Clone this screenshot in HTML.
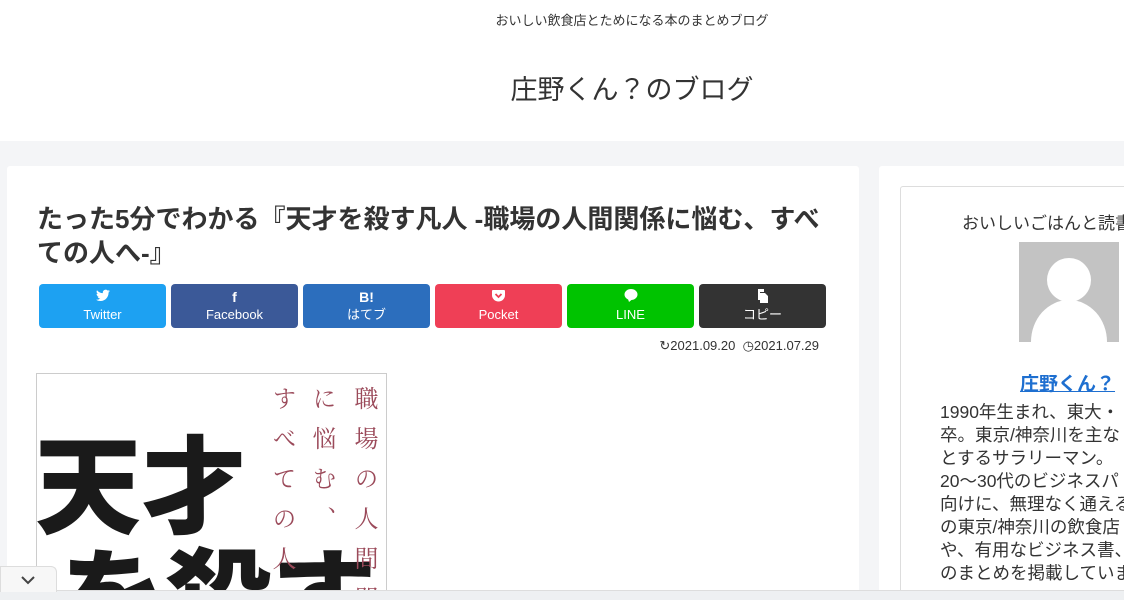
<!DOCTYPE html>
<html><head><meta charset="utf-8"><style>
*{margin:0;padding:0;box-sizing:border-box}
html,body{width:1124px;height:600px;overflow:hidden}
body{background:#f4f5f7;font-family:"Liberation Sans","Noto Sans CJK JP",sans-serif;color:#333;position:relative}
.hd{position:absolute;left:0;top:0;width:1124px;height:141px;background:#fff}
.tag{position:absolute;top:10px;left:0;width:1264px;text-align:center;font-size:13px;color:#333}
.logo{position:absolute;top:68px;left:0;width:1264px;text-align:center;font-size:27px;color:#333}
.main{position:absolute;left:7px;top:166px;width:852px;height:434px;background:#fff;border-radius:3px;overflow:hidden}
h1{position:absolute;left:30px;top:36px;width:800px;font-size:26px;line-height:34px;font-weight:bold;color:#333}
.btns{position:absolute;left:32px;top:118px;display:flex;gap:5px}
.b{width:127px;height:44px;border-radius:4px;color:#fff;text-align:center;font-size:13px;padding-top:5px;line-height:17px}
.b i{display:block;font-style:normal;font-weight:bold;font-size:14px;height:17px}
.date{position:absolute;right:40px;top:172px;font-size:13px;color:#333}
.book{position:absolute;left:29px;top:207px;width:351px;height:240px;border:1px solid #ccc;overflow:hidden;background:#fff}
.big{position:absolute;font-size:106px;font-weight:900;color:#1a1a1a;line-height:1;font-family:"Noto Sans CJK JP",sans-serif;white-space:nowrap}
.v{position:absolute;writing-mode:vertical-rl;white-space:nowrap;height:400px;width:26px;font-family:"Noto Serif CJK SC",serif;font-size:24px;color:#9b4a5a;letter-spacing:16px;line-height:26px}
.side{position:absolute;left:879px;top:166px;width:260px;height:434px;background:#fff;border-radius:3px;overflow:hidden}
.box{position:absolute;left:21px;top:20px;width:260px;height:420px;border:1px solid #ddd;border-radius:3px}
.st{position:absolute;left:61px;top:22px;font-size:17px;white-space:nowrap}
.av{position:absolute;left:118px;top:55px;width:100px;height:100px;background:#c3c3c3;overflow:hidden}
.nm{position:absolute;left:119px;top:182px;font-size:19px;font-weight:bold;color:#1e6fd0;text-decoration:underline}
.pr{position:absolute;left:39px;top:214px;font-size:17.5px;line-height:23px;white-space:nowrap;width:300px}
.bar{position:absolute;left:0;top:590px;width:1124px;height:10px;background:#eef0f2;border-top:1px solid #ddd}
.tab{position:absolute;left:0;top:566px;width:57px;height:26px;background:#f7f7f7;border:1px solid #ddd;border-bottom:none;border-radius:0 6px 0 0}
</style></head><body>
<div class="hd"><div class="tag">おいしい飲食店とためになる本のまとめブログ</div><div class="logo">庄野くん？のブログ</div></div>
<div class="main">
<h1>たった5分でわかる『天才を殺す凡人 -職場の人間関係に悩む、すべての人へ-』</h1>
<div class="btns">
<div class="b" style="background:#1da1f2"><i><svg width="14" height="13" viewBox="0 0 24 20"><path fill="#fff" d="M24 2.4a10 10 0 0 1-2.8.8A5 5 0 0 0 23.3.5a10 10 0 0 1-3.1 1.2A4.9 4.9 0 0 0 11.8 6 14 14 0 0 1 1.7.9a4.9 4.9 0 0 0 1.5 6.6A4.9 4.9 0 0 1 1 6.9a4.9 4.9 0 0 0 3.9 4.8 5 5 0 0 1-2.2.1 4.9 4.9 0 0 0 4.6 3.4A9.9 9.9 0 0 1 0 17.3 14 14 0 0 0 7.5 19.5c9 0 14-7.5 14-14v-.6A10 10 0 0 0 24 2.4z"/></svg></i>Twitter</div>
<div class="b" style="background:#3b5998"><i>f</i>Facebook</div>
<div class="b" style="background:#2c6ebd"><i>B!</i>はてブ</div>
<div class="b" style="background:#ef3f56"><i><svg width="13" height="12" viewBox="0 0 13 12"><path fill="#fff" d="M1 0h11a1 1 0 0 1 1 1v4a6.5 6.5 0 0 1-13 0V1a1 1 0 0 1 1-1z"/><path d="M3.5 4l3 3 3-3" stroke="#ef3f56" stroke-width="1.8" fill="none"/></svg></i>Pocket</div>
<div class="b" style="background:#00c300"><i><svg width="14" height="13" viewBox="0 0 14 13"><ellipse cx="7" cy="5.5" rx="6.5" ry="5.5" fill="#fff"/><path d="M4 10l1 3 3-2.5z" fill="#fff"/></svg></i>LINE</div>
<div class="b" style="background:#333"><i><svg width="12" height="14" viewBox="0 0 12 14"><path fill="#fff" d="M1 0h6v3h-6zM3 4h5l3 3v7h-8z"/><rect x="1" y="0" width="2" height="11" fill="#fff"/></svg></i>コピー</div>
</div>
<div class="date">↻2021.09.20 &nbsp;◷2021.07.29</div>
<div class="book">
<div class="big" style="left:-2px;top:52px">天才</div>
<div class="big" style="left:22px;top:164px">を殺す</div>
<div class="v" style="left:316px;top:12px">職場の人間関係</div>
<div class="v" style="left:274px;top:12px">に悩む、</div>
<div class="v" style="left:234px;top:12px">すべての人へ</div>
</div>
</div>
<div class="side"><div class="box">
<div class="st">おいしいごはんと読書</div>
<div class="av"><svg width="100" height="100"><circle cx="50" cy="38" r="22" fill="#fff"/><ellipse cx="50" cy="100" rx="38" ry="42" fill="#fff"/></svg></div>
<div class="nm">庄野くん？</div>
<div class="pr">1990年生まれ、東大・<br>卒。東京/神奈川を主な<br>とするサラリーマン。<br>20〜30代のビジネスパ<br>向けに、無理なく通える<br>の東京/神奈川の飲食店<br>や、有用なビジネス書、<br>のまとめを掲載していま</div>
</div></div>
<div class="bar"></div>
<div class="tab"><svg width="57" height="24"><path d="M21 10l6 6 6-6" stroke="#444" stroke-width="2" fill="none"/></svg></div>
</body></html>
